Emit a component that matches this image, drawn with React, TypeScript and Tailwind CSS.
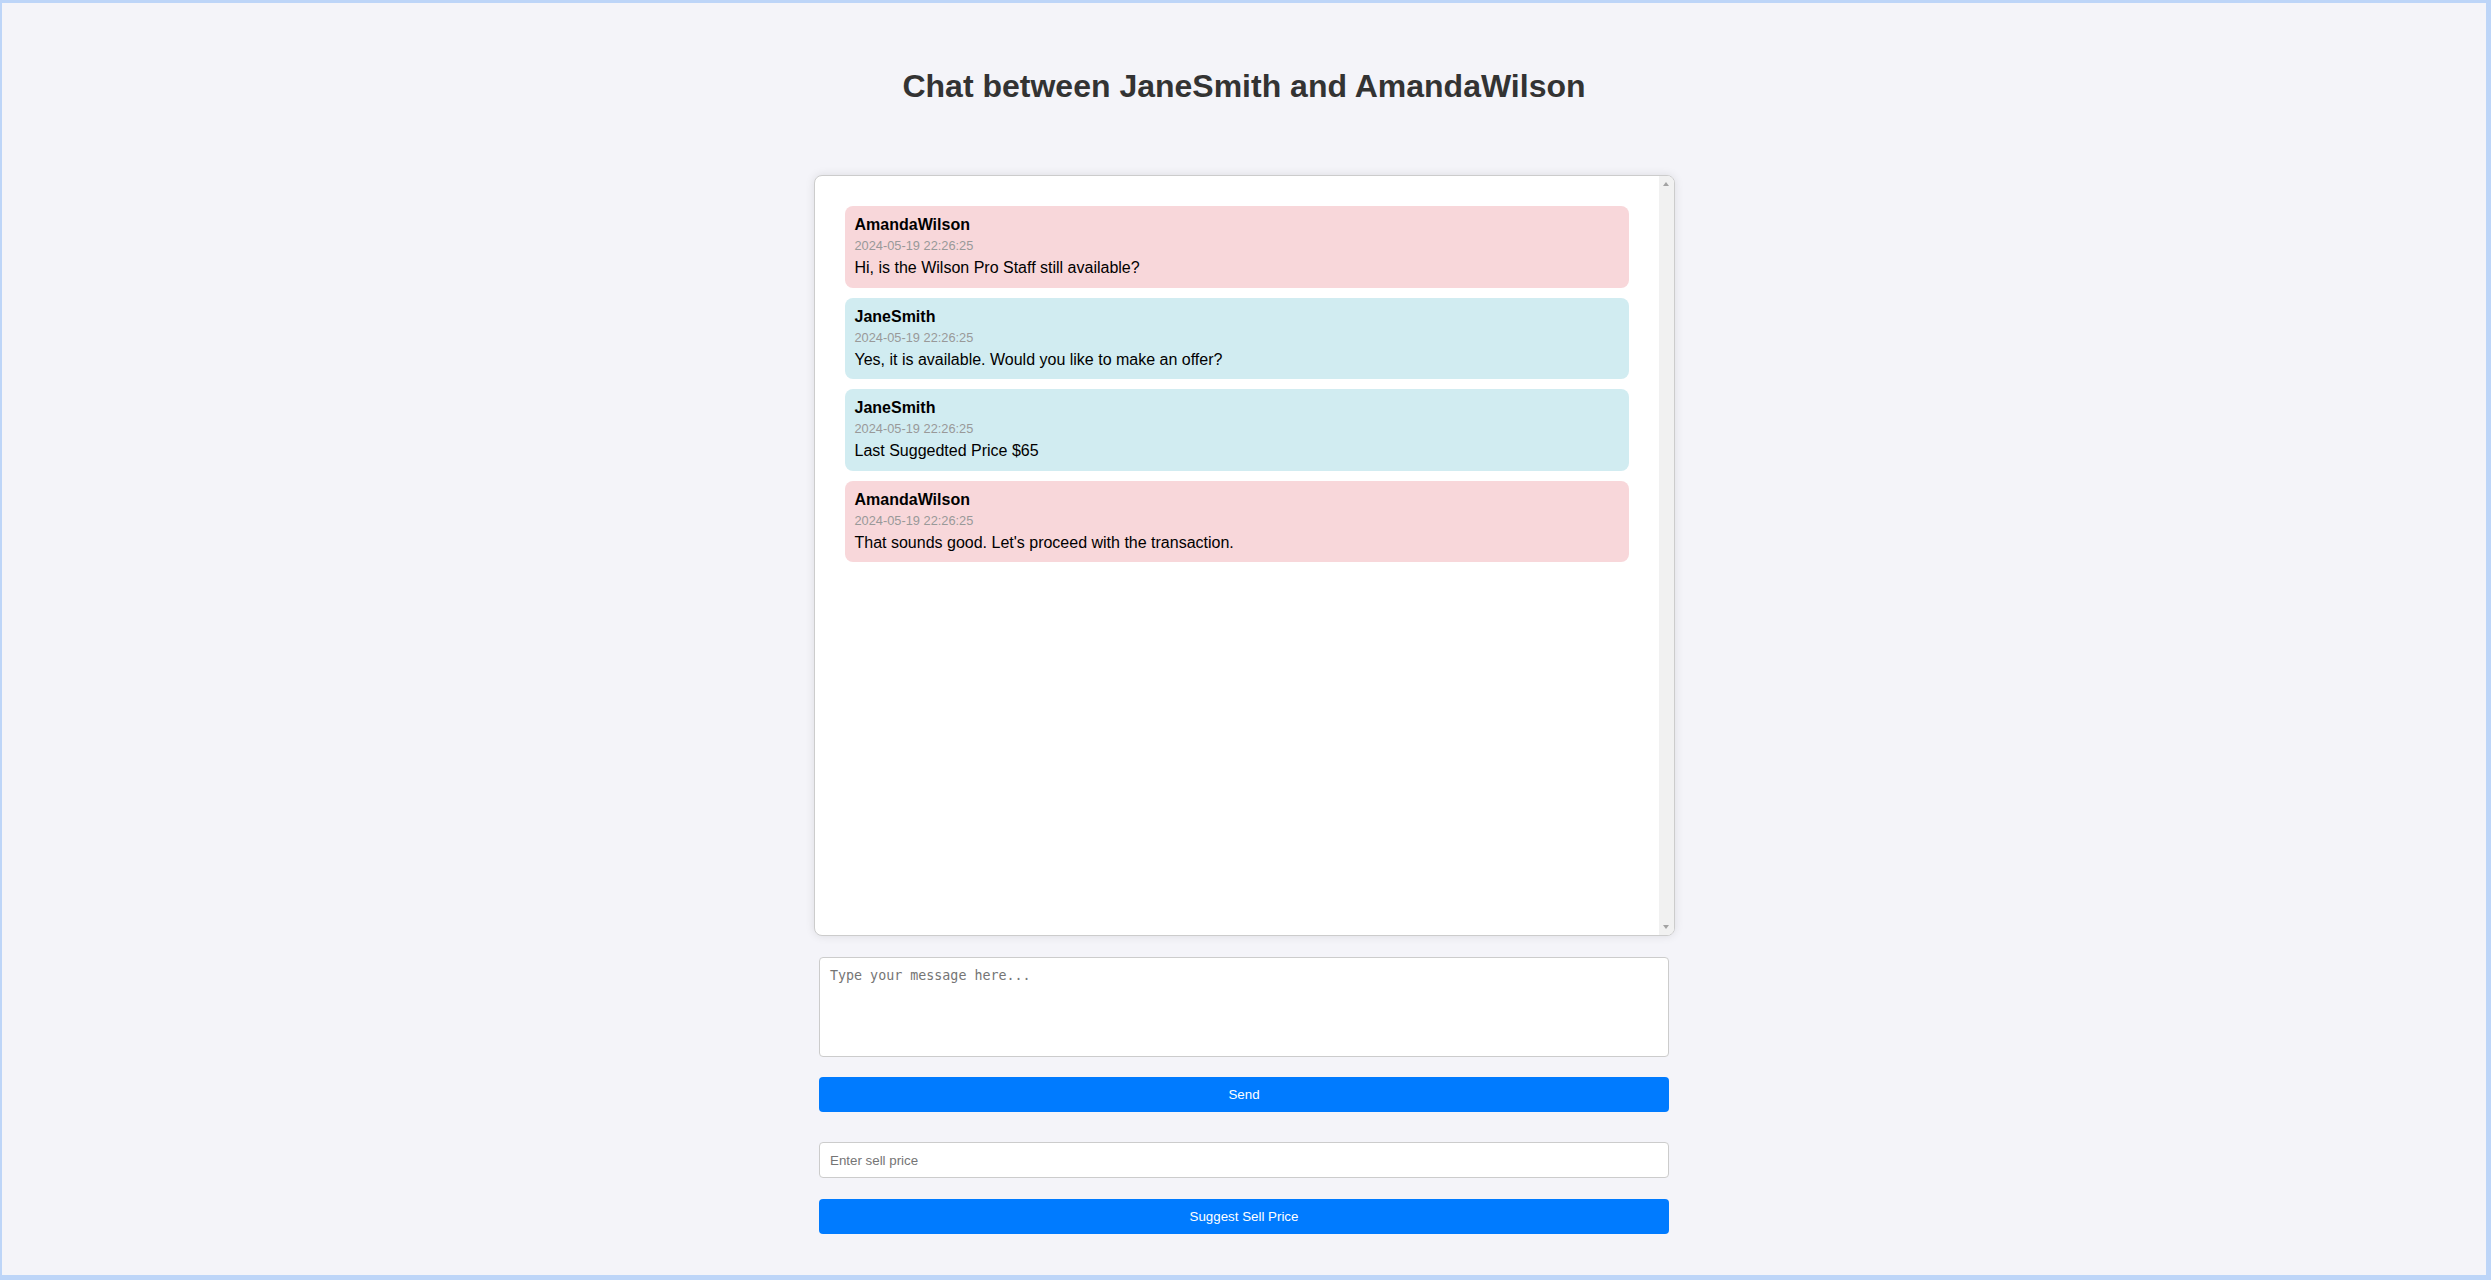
import React, { useState } from 'react'

interface Message {
  sender: string
  time: string
  text: string
}

const messages: Message[] = [
  { sender: 'AmandaWilson', time: '2024-05-19 22:26:25', text: 'Hi, is the Wilson Pro Staff still available?' },
  { sender: 'JaneSmith', time: '2024-05-19 22:26:25', text: 'Yes, it is available. Would you like to make an offer?' },
  { sender: 'JaneSmith', time: '2024-05-19 22:26:25', text: 'Last Suggedted Price $65' },
  { sender: 'AmandaWilson', time: '2024-05-19 22:26:25', text: "That sounds good. Let's proceed with the transaction." },
]

const currentUser = 'JaneSmith'

export default function App() {
  const [draft, setDraft] = useState('')
  const [price, setPrice] = useState('')

  return (
    <div className="h-screen box-border overflow-hidden border-t-[3px] border-l-2 border-r-[5px] border-b-[5px] border-[#bdd5f8] bg-[#f4f4f9] font-['Liberation_Sans',Arial,sans-serif] text-black">
      <h1 className="mt-[65px] text-center text-[32px] leading-[37px] font-bold text-[#333]">
        Chat between JaneSmith and AmandaWilson
      </h1>

      {/* Message list with a classic scrollbar track */}
      <div className="mx-auto mt-[70px] flex h-[761px] w-[861px] overflow-hidden rounded-lg border border-[#ccc] bg-white shadow-[0_0_10px_rgba(0,0,0,0.1)]">
        <div className="flex-1 p-5">
          {messages.map((m, idx) => (
            <div
              key={idx}
              className={
                m.sender === currentUser
                  ? 'my-[10px] mx-[10px] rounded-lg bg-[#d1ecf1] p-[10px]'
                  : 'my-[10px] mx-[10px] rounded-lg bg-[#f8d7da] p-[10px]'
              }
            >
              <div className="text-[16px] leading-[18.4px] font-bold">{m.sender}</div>
              <div className="my-[5px] text-[12.8px] leading-[14.7px] text-[#999]">{m.time}</div>
              <div className="text-[16px] leading-[18.4px]">{m.text}</div>
            </div>
          ))}
        </div>
        <div className="flex w-[15px] flex-col items-center justify-between bg-[#f1f1f1] py-[6px]">
          <div className="h-0 w-0 border-x-[3.5px] border-b-[4px] border-x-transparent border-b-[#a3a3a3]" />
          <div className="h-0 w-0 border-x-[3.5px] border-t-[4px] border-x-transparent border-t-[#a3a3a3]" />
        </div>
      </div>

      {/* Composer */}
      <div className="mx-auto mt-[21px] flex w-[850px] flex-col">
        <textarea
          value={draft}
          onChange={(e) => setDraft(e.target.value)}
          placeholder="Type your message here..."
          className="block h-[100px] w-full resize-none rounded-[4px] border border-[#ccc] bg-white p-[10px] font-['DejaVu_Sans_Mono',monospace] text-[13.33px] leading-[16px] placeholder:text-[#757575] outline-none"
        />
        <button className="mt-5 h-[35px] w-full rounded-[4px] bg-[#007bff] text-[13.33px] text-white">
          Send
        </button>

        <input
          type="text"
          value={price}
          onChange={(e) => setPrice(e.target.value)}
          placeholder="Enter sell price"
          className="mt-[30px] block h-[36px] w-full rounded-[4px] border border-[#ccc] bg-white px-[10px] text-[13.33px] placeholder:text-[#757575] outline-none"
        />
        <button className="mt-[21px] h-[35px] w-full rounded-[4px] bg-[#007bff] text-[13.33px] text-white">
          Suggest Sell Price
        </button>
      </div>
    </div>
  )
}
